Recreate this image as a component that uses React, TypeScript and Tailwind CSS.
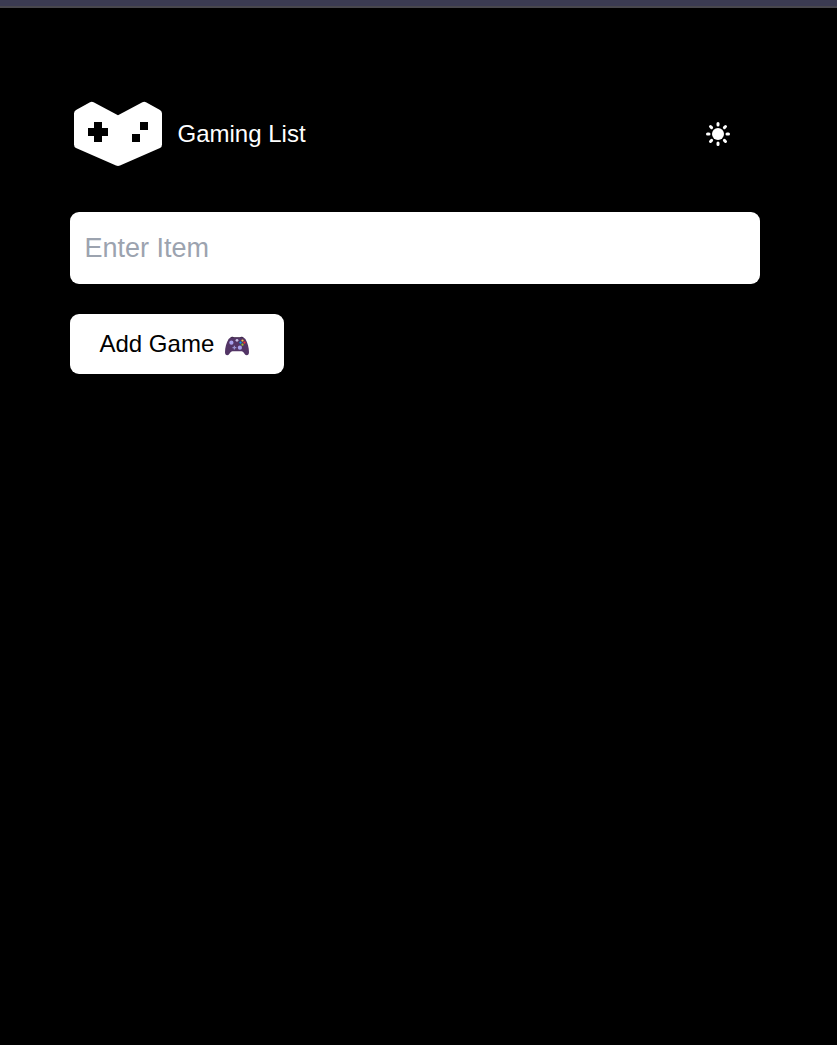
import { useState } from "react";

function Logo() {
  return (
    <svg width="96" height="72" viewBox="0 0 96 72" aria-hidden="true">
      <path
        d="M6 12.1 20 4.2Q21.8 3.3 23.6 4.2L48 17.2 72.4 4.2Q74.2 3.3 76 4.2L90 12.1Q92 13.3 92 15.5V46.5Q92 49 90 50L50 67.6Q48 68.5 46 67.6L6 50Q4 49 4 46.5V15.5Q4 13.3 6 12.1Z"
        fill="#fff"
      />
      <path
        d="M24 24h8v6h6v8h-6v6h-8v-6h-6v-8h6ZM70 24h8v8h-8ZM62 36h8v8h-8Z"
        fill="#000"
        shapeRendering="crispEdges"
      />
    </svg>
  );
}

function Sun() {
  return (
    <svg width="24" height="24" viewBox="0 0 24 24" aria-hidden="true">
      <circle cx="12" cy="12" r="6" fill="#fff" />
      <path
        d="M12 1.5V3M12 21v1.5M1.5 12H3M21 12h1.5M4.5 4.5 5.6 5.6M18.4 18.4 19.5 19.5M4.5 19.5 5.6 18.4M18.4 5.6 19.5 4.5"
        stroke="#fff"
        strokeWidth="3"
        strokeLinecap="round"
      />
    </svg>
  );
}

function Controller() {
  return (
    <svg width="26" height="20" viewBox="0 0 26 20" aria-hidden="true">
      <path d="M6.2 2Q6.8 .6 8.8 .8L10 1.3H16L17.2 .8Q19.2 .6 19.8 2Z" fill="#37243f" />
      <path
        d="M4.6 2.9Q5.8 1.2 8 1.4L10 1.8H16L18 1.4Q20.2 1.2 21.4 2.9C23.6 6.4 25 11.5 25 16.2Q24.9 19.2 22.7 19.2C20.5 19.2 19.9 15.2 17.6 15.2H8.4C6.1 15.2 5.5 19.2 3.3 19.2Q1.1 19.2 1 16.2C1 11.5 2.4 6.4 4.6 2.9Z"
        fill="#533566"
      />
      <circle cx="7.4" cy="6.7" r="2.1" fill="#a8a2ed" />
      <circle cx="15.9" cy="11.7" r="2.1" fill="#a8a2ed" />
      <path d="M8.5 11.7h3.8M10.4 9.8v3.8" stroke="#9690cf" strokeWidth="1.3" />
      <circle cx="13" cy="4.3" r="1.4" fill="#c8c2e5" />
      <circle cx="18.5" cy="4.5" r="1.1" fill="#ffc83d" />
      <circle cx="16.5" cy="6.6" r="1.1" fill="#00a6ed" />
      <circle cx="20.5" cy="6.6" r="1.1" fill="#f8312f" />
      <circle cx="18.5" cy="8.7" r="1.1" fill="#9cc52a" />
    </svg>
  );
}

export default function App() {
  const [item, setItem] = useState("");

  return (
    <div className="min-h-screen bg-black font-['Liberation_Sans',Arial,sans-serif]">
      <div className="h-2 border-b-2 border-[#48474d] bg-[#3b3b52]" />
      <main className="ml-[70px] w-[690px] pt-[90px]">
        <header className="flex h-[72px] items-center">
          <Logo />
          <h1 className="ml-[11.5px] text-[24px] leading-9 text-white">Gaming List</h1>
          <button aria-label="Toggle theme" className="mr-[30px] ml-auto">
            <Sun />
          </button>
        </header>
        <form onSubmit={(event) => event.preventDefault()}>
          <input
            value={item}
            onChange={(event) => setItem(event.target.value)}
            placeholder="Enter Item"
            className="mt-[42px] block h-[72px] w-full rounded-[9px] bg-white px-[14.5px] text-[27px] text-black outline-none placeholder:text-[#9ca3af]"
          />
          <button className="mt-[30px] flex h-[60px] w-[214px] items-center rounded-[9px] bg-white pl-[29.5px] text-[24px] text-black">
            <span>Add Game</span>
            <span className="mt-1 ml-2.5">
              <Controller />
            </span>
          </button>
        </form>
      </main>
    </div>
  );
}
